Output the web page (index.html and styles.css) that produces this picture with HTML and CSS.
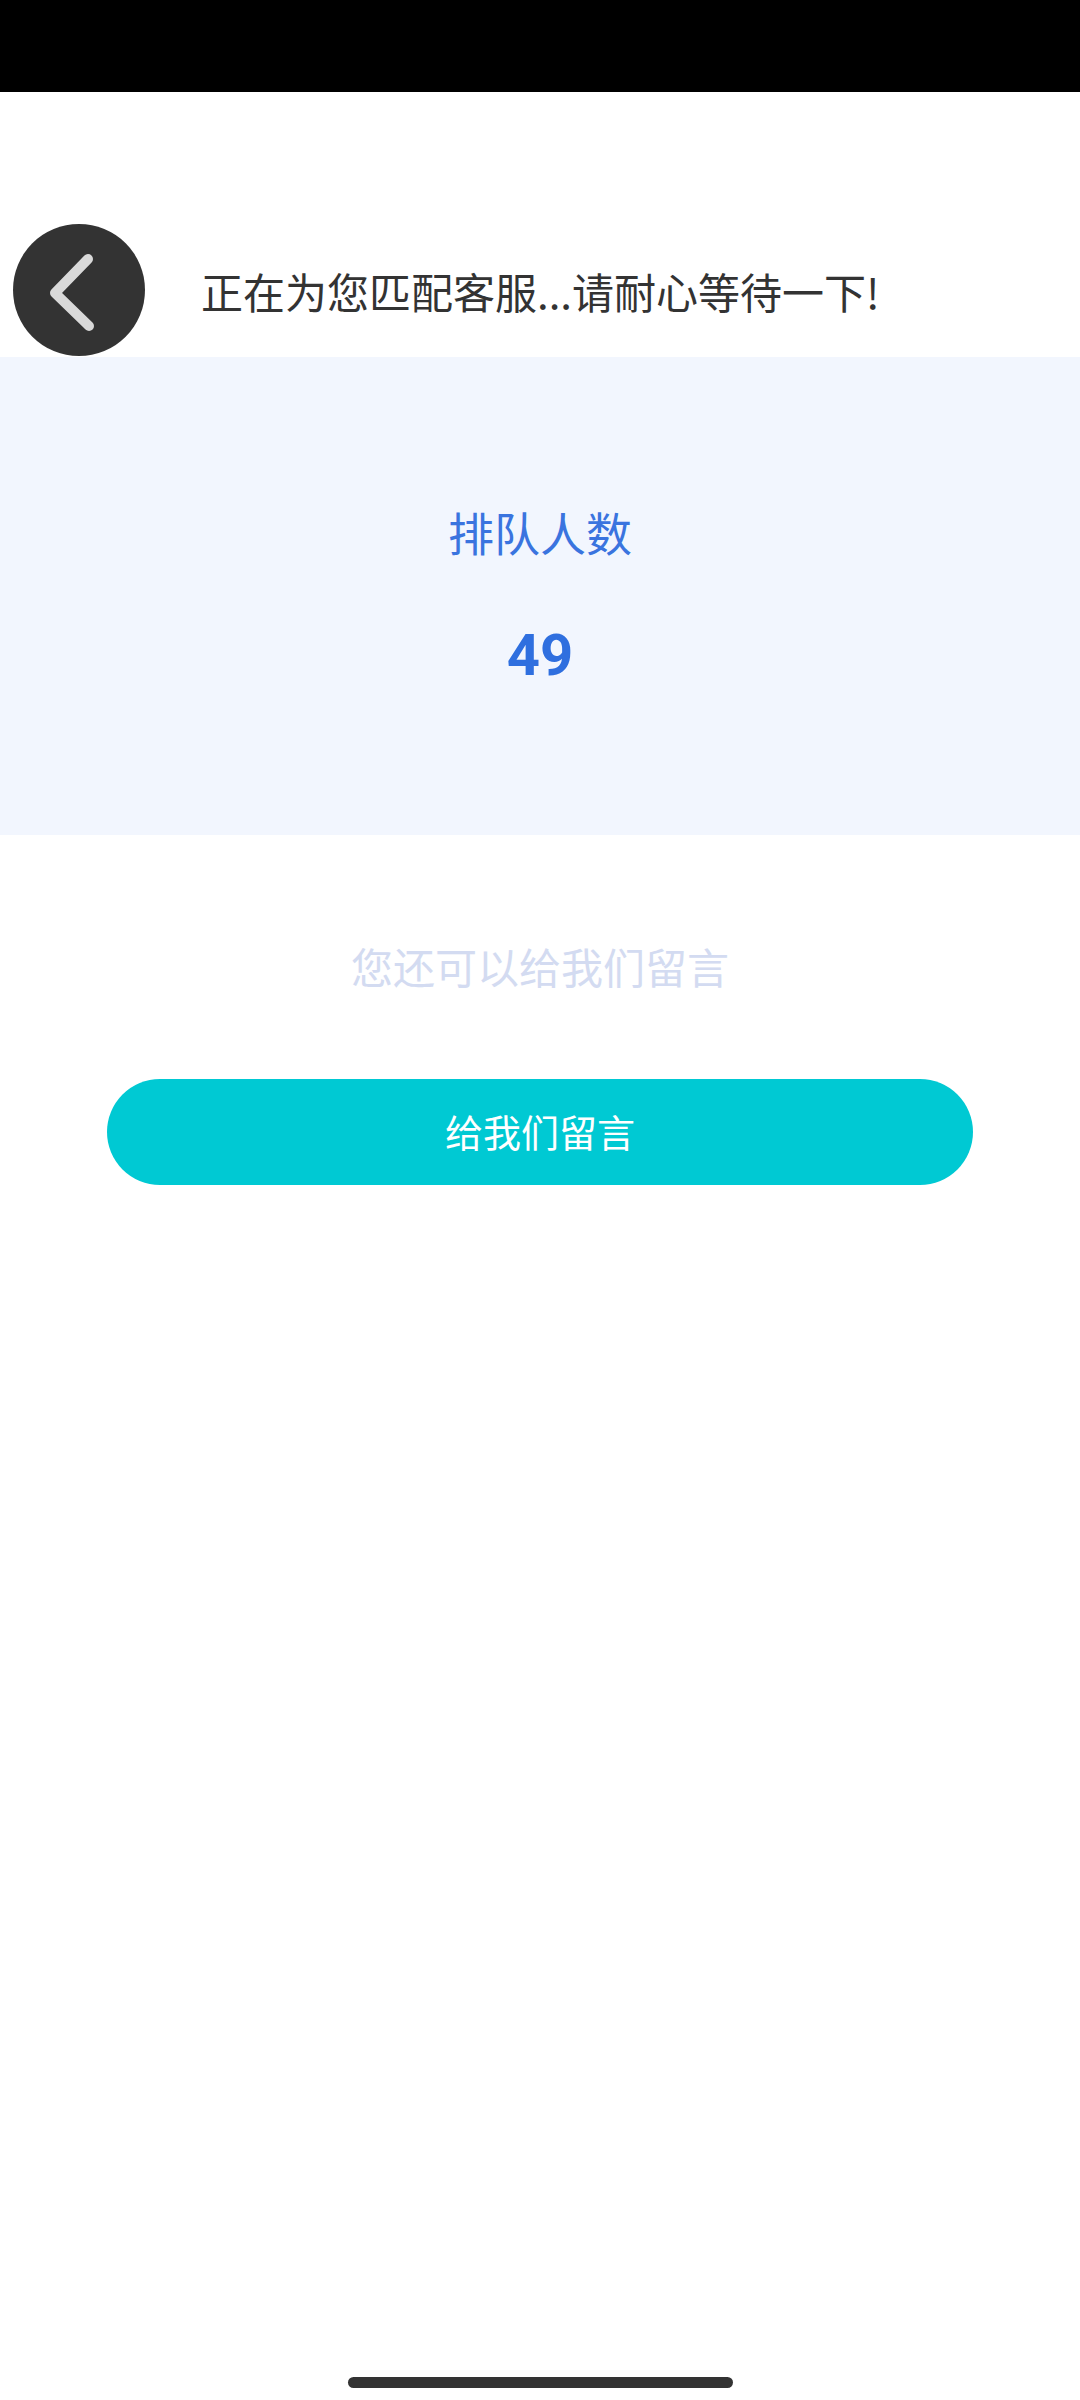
FILE: index.html
```html
<!DOCTYPE html>
<html lang="zh-CN">
<head>
<meta charset="utf-8">
<title>排队</title>
<link rel="stylesheet" href="styles.css">
</head>
<body>
<div class="page">
  <div class="status-bar"></div>
  <header class="header">
    <div class="back-btn">
      <svg width="132" height="132" viewBox="0 0 132 132">
        <circle cx="66" cy="66" r="66" fill="#333333"/>
        <polyline points="75,35 42,69 76,102" fill="none" stroke="#d9d9d9" stroke-width="10" stroke-linecap="round" stroke-linejoin="round"/>
      </svg>
    </div>
    <div class="header-text">正在为您匹配客服...请耐心等待一下!</div>
  </header>
  <section class="queue-panel">
    <div class="queue-label">排队人数</div>
    <div class="queue-count">49</div>
  </section>
  <section class="message">
    <div class="message-hint">您还可以给我们留言</div>
    <button class="message-btn">给我们留言</button>
  </section>
  <div class="spacer"></div>
  <div class="home-bar"><div class="home-indicator"></div></div>
</div>
</body>
</html>
```
FILE: styles.css
```css
* { box-sizing: border-box; }
html, body {
  margin: 0;
  padding: 0;
  background: #ffffff;
}
body {
  font-family: "Noto Sans CJK SC", "Noto Sans", sans-serif;
}
.page {
  width: 1080px;
  height: 2400px;
  display: flex;
  flex-direction: column;
}
.status-bar {
  height: 92px;
  background: #000000;
  flex: none;
}
.header {
  height: 265px;
  flex: none;
  display: flex;
  align-items: flex-end;
  padding-left: 13px;
}
.back-btn {
  width: 132px;
  height: 134px;
  display: flex;
  align-items: center;
  flex: none;
}
.back-btn svg { display: block; }
.header-text {
  margin-left: 56px;
  height: 134px;
  display: flex;
  align-items: center;
  font-size: 42px;
  color: #333333;
  letter-spacing: 0;
  padding-top: 0;
}
.queue-panel {
  height: 478px;
  flex: none;
  background: #f2f6fe;
  display: flex;
  flex-direction: column;
  align-items: center;
  padding-top: 151px;
}
.queue-label {
  font-size: 46px;
  line-height: 46px;
  color: #3a74df;
}
.queue-count {
  margin-top: 72px;
  font-family: Roboto, "Noto Sans", sans-serif;
  font-weight: 700;
  font-size: 58px;
  line-height: 58px;
  color: #2f6fdf;
}
.message {
  display: flex;
  flex-direction: column;
  align-items: center;
  padding-top: 110px;
}
.message-hint {
  font-size: 42px;
  line-height: 42px;
  color: #d3dbf1;
}
.message-btn {
  margin-top: 92px;
  width: 866px;
  height: 106px;
  border: none;
  border-radius: 53px;
  background: #00c9d3;
  color: #ffffff;
  font-family: "Noto Sans CJK SC", "Noto Sans", sans-serif;
  font-size: 38px;
  padding: 0 0 4px 0;
}
.spacer { flex: 1; }
.home-bar {
  height: 56px;
  flex: none;
  display: flex;
  justify-content: center;
  padding-top: 33px;
}
.home-indicator {
  width: 385px;
  height: 11px;
  border-radius: 6px;
  background: #333333;
}
```
